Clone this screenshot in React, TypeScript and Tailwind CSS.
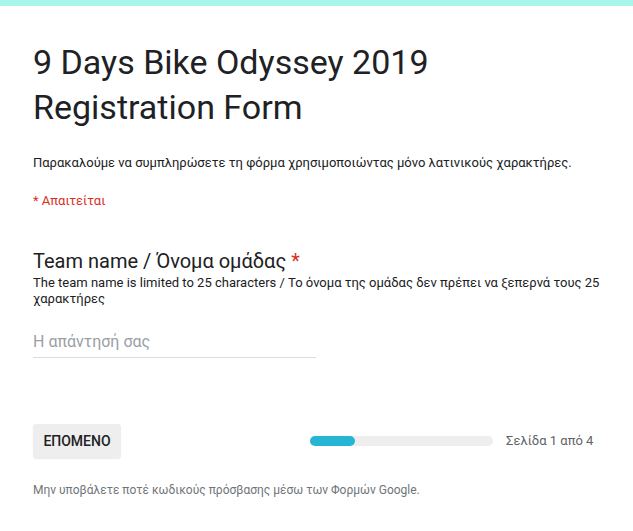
export default function App() {
  return (
    <div className="min-h-[531px] w-full bg-white font-['Roboto',sans-serif] text-[#202124]">
      <div className="h-[6px] bg-[#a8f6ea]" />
      <div className="pl-[33px] pr-[24px] pt-[34px]">
        <h1 className="text-[34px] leading-[45px] font-normal text-[#202124]">
          9 Days Bike Odyssey 2019
          <br />
          Registration Form
        </h1>
        <p className="mt-[24px] text-[13px] leading-[18px]">
          Παρακαλούμε να συμπληρώσετε τη φόρμα χρησιμοποιώντας μόνο λατινικούς χαρακτήρες.
        </p>
        <p className="mt-[20px] text-[13px] leading-[18px] text-[#d93025]">* Απαιτείται</p>

        <div className="mt-[39px]">
          <div className="text-[20px] leading-[24px]">
            Team name / Όνομα ομάδας <span className="text-[#d93025]">*</span>
          </div>
          <div className="mt-[2px] text-[13px] leading-[16px]">
            The team name is limited to 25 characters / Το όνομα της ομάδας δεν πρέπει να ξεπερνά τους 25 χαρακτήρες
          </div>
          <div className="mt-[25px] w-[283px] border-b border-[#dadce0] pb-[5px] text-[16px] leading-[20px] text-[#9aa0a6]">
            Η απάντησή σας
          </div>
        </div>

        <div className="mt-[66px] flex items-center">
          <div className="flex h-[34px] w-[88px] items-center justify-center rounded-[3px] bg-[#eeeeee] text-[14px] font-medium text-[#202124] shadow-[0_1px_1px_rgba(0,0,0,0.08)]">
            ΕΠΟΜΕΝΟ
          </div>
          <div className="ml-[189px] h-[10px] w-[183px] rounded-full bg-[#eeeeee]">
            <div className="h-[10px] w-[45px] rounded-full bg-[#26b6d4]" />
          </div>
          <div className="ml-[13px] text-[13px] text-[#5f6368]">Σελίδα 1 από 4</div>
        </div>

        <p className="mt-[24px] text-[12px] leading-[16px] text-[#70757a]">
          Μην υποβάλετε ποτέ κωδικούς πρόσβασης μέσω των Φορμών Google.
        </p>
      </div>
    </div>
  );
}
